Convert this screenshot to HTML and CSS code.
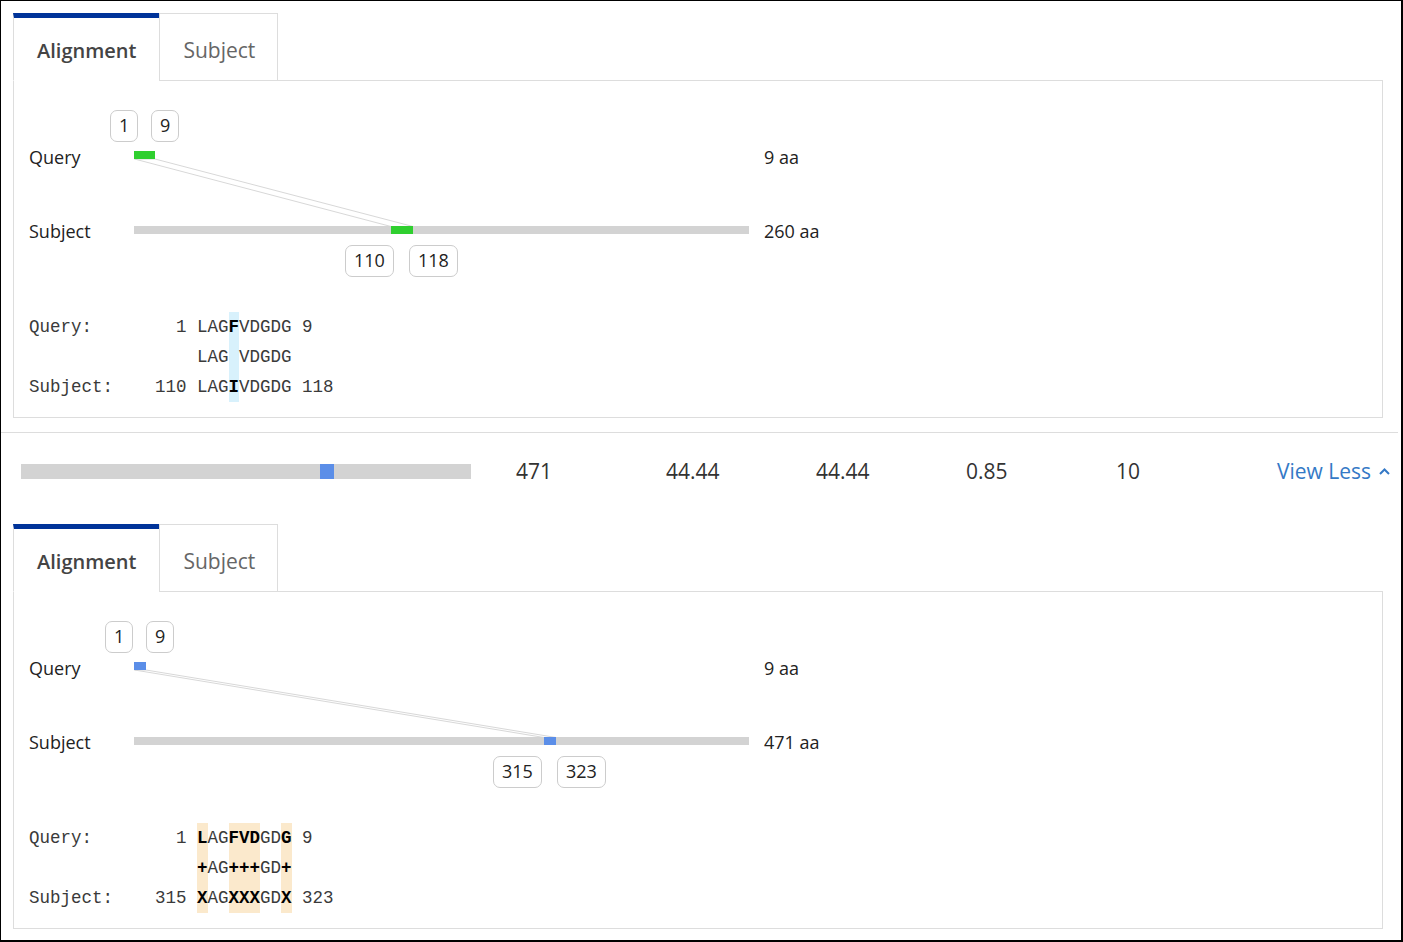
FILE: index.html
```html
<!DOCTYPE html>
<html lang="en">
<head>
    <meta charset="UTF-8">
    <title>Alignment details</title>
    <link rel="stylesheet" href="styles.css">
</head>
<body>
<div class="frame">

    <!-- Hit 1: query vs 260 aa subject -->
    <section class="hit">
        <div class="tabs">
            <div class="tab active">Alignment</div>
            <div class="tab">Subject</div>
        </div>
        <div class="panel">
            <div class="diagram">
                <div class="seq-names">
                    <div>Query</div>
                    <div>Subject</div>
                </div>
                <div class="track">
                    <svg width="615" height="167" viewBox="0 0 615 167">
                        <polygon class="link" points="0.5,49 21,49 279,116.5 257,116.5"/>
                        <rect x="0" y="41" width="21" height="8" fill="#2fcf2f"/>
                        <rect x="0" y="116" width="615" height="8" fill="#d3d3d3"/>
                        <rect x="257" y="116" width="22" height="8" fill="#2fcf2f"/>
                    </svg>
                    <span class="pos" style="left: -24px; top: 0;">1</span>
                    <span class="pos" style="left: 17px; top: 0;">9</span>
                    <span class="pos" style="left: 211px; top: 135px;">110</span>
                    <span class="pos" style="left: 275px; top: 135px;">118</span>
                </div>
                <div class="seq-lengths">
                    <div>9 aa</div>
                    <div>260 aa</div>
                </div>
            </div>
            <div class="alignment">
                <div class="line">Query:        1 LAG<b class="mark ident">F</b>VDGDG 9</div>
                <div class="line">                LAG<span class="mark ident"> </span>VDGDG</div>
                <div class="line">Subject:    110 LAG<b class="mark ident">I</b>VDGDG 118</div>
            </div>
        </div>
    </section>

    <!-- Summary row for hit 2 -->
    <div class="summary">
        <div class="coverage">
            <span class="coverage-hit" style="left: 299px; width: 14px;"></span>
        </div>
        <div class="stat first">471</div>
        <div class="stat">44.44</div>
        <div class="stat">44.44</div>
        <div class="stat">0.85</div>
        <div class="stat">10</div>
        <a class="toggle" href="#">View Less
            <svg width="11" height="8" viewBox="0 0 11 8"><polyline points="1,7 5.5,2.5 10,7" fill="none" stroke="#3479c6" stroke-width="2"/></svg>
        </a>
    </div>

    <!-- Hit 2: query vs 471 aa subject -->
    <section class="hit second">
        <div class="tabs">
            <div class="tab active">Alignment</div>
            <div class="tab">Subject</div>
        </div>
        <div class="panel">
            <div class="diagram">
                <div class="seq-names">
                    <div>Query</div>
                    <div>Subject</div>
                </div>
                <div class="track">
                    <svg width="615" height="167" viewBox="0 0 615 167">
                        <polygon class="link" points="0.5,49 12,49 422,116.5 410,116.5"/>
                        <rect x="0" y="41" width="12" height="8" fill="#5b8ee8"/>
                        <rect x="0" y="116" width="615" height="8" fill="#d3d3d3"/>
                        <rect x="410" y="116" width="12" height="8" fill="#5b8ee8"/>
                    </svg>
                    <span class="pos" style="left: -29px; top: 0;">1</span>
                    <span class="pos" style="left: 12px; top: 0;">9</span>
                    <span class="pos" style="left: 359px; top: 135px;">315</span>
                    <span class="pos" style="left: 423px; top: 135px;">323</span>
                </div>
                <div class="seq-lengths">
                    <div>9 aa</div>
                    <div>471 aa</div>
                </div>
            </div>
            <div class="alignment">
                <div class="line">Query:        1 <b class="mark posit">L</b>AG<b class="mark posit">FVD</b>GD<b class="mark posit">G</b> 9</div>
                <div class="line">                <b class="mark posit">+</b>AG<b class="mark posit">+++</b>GD<b class="mark posit">+</b></div>
                <div class="line">Subject:    315 <b class="mark posit">X</b>AG<b class="mark posit">XXX</b>GD<b class="mark posit">X</b> 323</div>
            </div>
        </div>
    </section>

</div>
</body>
</html>
```

FILE: styles.css
```css
/* Page frame */
body {
    margin: 0;
    background-color: #fff;
}

.frame {
    width: 1403px;
    height: 942px;
    box-sizing: border-box;
    border: 1px solid #000;
    border-right-width: 2px;
    border-bottom-width: 2px;
    font-family: 'Open Sans', 'Liberation Sans', sans-serif;
    color: #222;
    background-color: #fff;
    overflow: hidden;
}

/* One hit block: tabs + panel */
.hit {
    padding: 12px 18px 0 12px;
}

.hit.second {
    padding-top: 15px;
}

.tabs {
    display: flex;
    margin-bottom: -1px;
    position: relative;
    z-index: 1;
}

.tab {
    height: 68px;
    box-sizing: border-box;
    padding: 5px 22px 0 23px;
    display: flex;
    align-items: center;
    font-size: 21px;
    color: #666;
    background-color: #fff;
    border: 1px solid #ddd;
}

.tab.active {
    padding: 3px 23px 0 23px;
    font-size: 20px;
    color: #444;
    font-weight: 600;
    border-top: 5px solid #003399;
    border-right: none;
    border-bottom-color: #fff;
}

.panel {
    border: 1px solid #ddd;
    padding: 29px 15px 15px 15px;
}

/* Query / subject overview */
.diagram {
    display: flex;
    height: 167px;
}

.seq-names,
.seq-lengths {
    display: flex;
    flex-direction: column;
    gap: 50px;
    padding-top: 35px;
    font-size: 18px;
    line-height: 24px;
}

.seq-names {
    width: 105px;
}

.seq-lengths {
    padding-left: 15px;
}

.track {
    position: relative;
    width: 615px;
}

.track svg {
    display: block;
}

.link {
    fill: none;
    stroke: #d8d8d8;
    stroke-width: 1;
}

.pos {
    position: absolute;
    height: 32px;
    box-sizing: border-box;
    padding: 0 8px;
    border: 1.5px solid #ccc;
    border-radius: 7px;
    background-color: #fff;
    font-size: 18px;
    line-height: 29px;
    color: #222;
}

/* Residue alignment text */
.alignment {
    margin-top: 35px;
    font-family: 'Liberation Mono', 'DejaVu Sans Mono', monospace;
    font-size: 17.5px;
    color: #3a3a3a;
}

.line {
    height: 30px;
    line-height: 30px;
    white-space: pre;
}

.mark {
    display: inline-block;
    height: 30px;
    line-height: 30px;
    color: #000;
}

.mark.ident {
    background-color: #d8f1fc;
}

.mark.posit {
    background-color: #fbe9cc;
}

/* Summary row */
.summary {
    display: flex;
    align-items: center;
    height: 76px;
    margin-top: 14px;
    margin-right: 3px;
    padding-left: 20px;
    border-top: 1px solid #ddd;
    font-size: 21px;
    color: #333;
}

.coverage {
    position: relative;
    width: 450px;
    height: 15px;
    background-color: #d3d3d3;
}

.coverage-hit {
    position: absolute;
    top: 0;
    height: 15px;
    background-color: #5b8ee8;
}

.stat {
    width: 150px;
}

.stat.first {
    margin-left: 45px;
}

.toggle {
    margin-left: auto;
    padding-right: 8px;
    display: flex;
    align-items: center;
    gap: 8px;
    color: #3479c6;
    text-decoration: none;
}
```
